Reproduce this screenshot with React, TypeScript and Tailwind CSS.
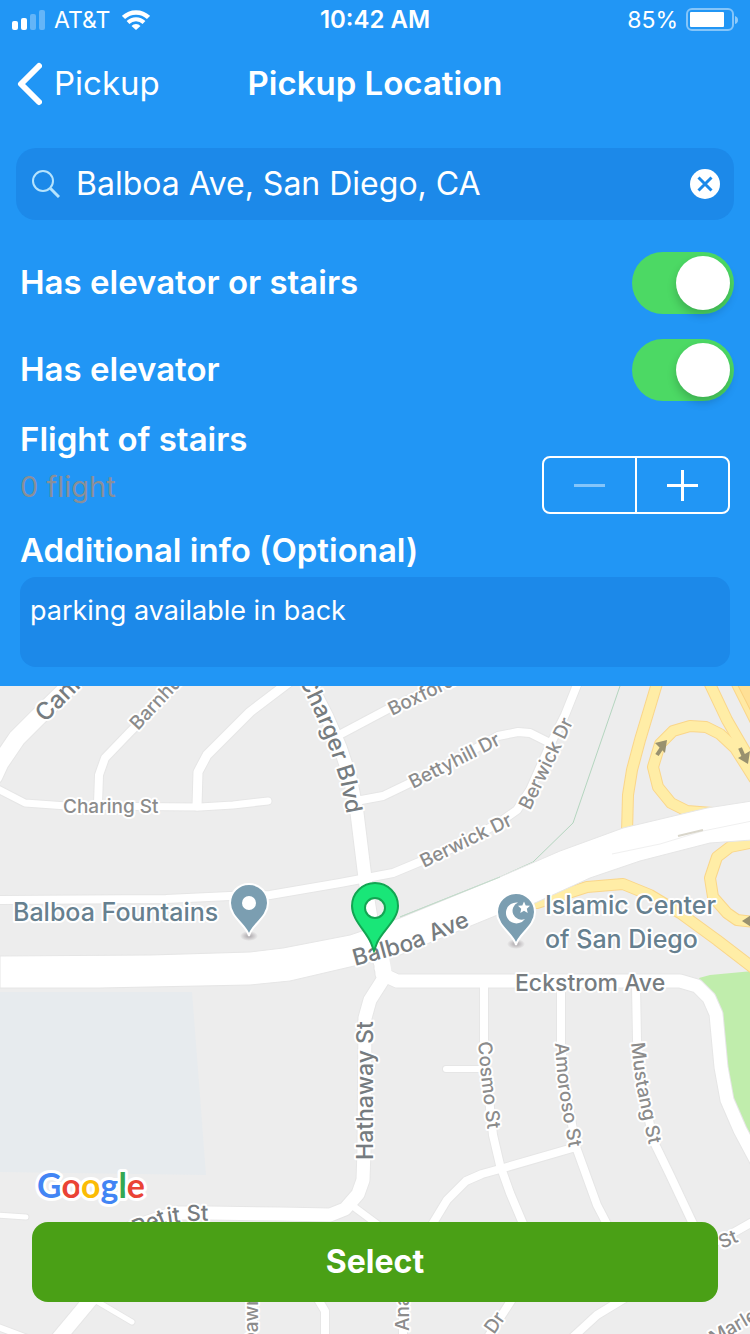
import React, { useState } from 'react'

type Road = { d: string; w: number }

const localRoads: Road[] = [
  { d: 'M-6 776L0 763L17 738L37 718L80 676', w: 17 },
  { d: 'M-4 788L25 803L67 806L200 807L233 805L268 801', w: 7 },
  { d: 'M98 804L99 775L105 758L130 732L182 680', w: 8 },
  { d: 'M197 806L198 772L207 755L250 712L292 680', w: 9 },
  { d: 'M306 676L327 717L340 747L350 777L357 813L365 878L368 900L376 950L385 976', w: 13 },
  { d: 'M341 734L390 708L450 680', w: 8 },
  { d: 'M356 801L383 796L410 783L455 760L498 736L518 732L530 733L550 743', w: 8 },
  { d: 'M-4 900L166 899L230 896L270 895L340 883L393 873L417 863L460 845L500 822L517 810L530 790L550 745L565 715L579 680', w: 8 },
  { d: 'M381 968L384 978L370 1000L365 1018L364 1150L363 1180L358 1194L345 1209L330 1215L280 1214L210 1213L175 1213L130 1228', w: 13 },
  { d: 'M350 1204L385 1230', w: 7 },
  { d: 'M382 974L397 981L680 981L697 986L709 998L716 1014L721 1067L727 1100L740 1130L756 1160', w: 13 },
  { d: 'M484 985V1045L487 1080L493 1135L500 1165L510 1193L524 1226', w: 8 },
  { d: 'M446 1069H484', w: 6 },
  { d: 'M430 1228L447 1200L466 1181L482 1174L500 1169L576 1147L597 1205L609 1228', w: 8 },
  { d: 'M561 985V1045L566 1090L576 1147', w: 8 },
  { d: 'M636 985L637 1040L643 1090L653 1140L670 1175L695 1228', w: 8 },
  { d: 'M700 1250L733 1233L754 1221', w: 8 },
  { d: 'M572 1338L597 1315L630 1295', w: 8 },
  { d: 'M480 1350L500 1318L514 1296', w: 8 },
  { d: 'M57 1340L92 1298', w: 14 },
  { d: 'M98 1302L132 1322', w: 5 },
  { d: 'M-2 1327L30 1339', w: 6 },
  { d: 'M-2 1215L26 1217', w: 5 },
  { d: 'M316 1296L325 1311V1340', w: 8 },
  { d: 'M253 1296V1340', w: 8 },
  { d: 'M403 1296V1340', w: 8 },
]

const ramps: Road[] = [
  { d: 'M658 680L640 740L632 770L628 795L627 832', w: 10 },
  { d: 'M708 680L727 720L756 770', w: 10 },
  { d: 'M754 778L735 748L720 734L706 727L690 726L673 731L660 744L653 767L658 787L671 803L687 811L712 813', w: 10 },
  { d: 'M537 903L587 887L623 884L650 895L680 913L717 940L756 970', w: 10 },
  { d: 'M754 842L730 847L717 857L710 878L713 897L727 913L737 920L754 922', w: 10 },
]

function Roads({ roads, casing, fill }: { roads: Road[]; casing: string; fill: string }) {
  return (
    <g fill="none" strokeLinejoin="round" strokeLinecap="round">
      {roads.map((r) => (
        <path key={'c' + r.d} d={r.d} stroke={casing} strokeWidth={r.w + 2} />
      ))}
      {roads.map((r) => (
        <path key={r.d} d={r.d} stroke={fill} strokeWidth={r.w} />
      ))}
    </g>
  )
}

function CurvedLabel({ id, d, size, children }: { id: string; d: string; size: number; children: string }) {
  return (
    <>
      <path id={id} d={d} fill="none" stroke="none" />
      <text fontSize={size}>
        <textPath href={'#' + id}>{children}</textPath>
      </text>
    </>
  )
}

function StreetMap() {
  return (
    <svg
      viewBox="0 686 750 648"
      preserveAspectRatio="xMidYMin slice"
      className="absolute inset-0 h-full w-full"
      role="img"
      aria-label="Map"
    >
      <defs>
        <radialGradient id="shade">
          <stop offset="0" stopColor="#a9a4a8" />
          <stop offset="1" stopColor="#a9a4a8" stopOpacity="0" />
        </radialGradient>
      </defs>
      <rect x="-500" y="0" width="2000" height="2400" fill="#ededed" />
      <path d="M0 992H192L198 1070L206 1175L0 1172Z" fill="#e7ebee" />
      <path d="M699 978L710 975L752 971V1150L730 1100L718 1010Z" fill="#c0edac" />
      <path d="M620 686L573 823L533 862L500 877L400 917" fill="none" stroke="#b4d5bf" />

      <Roads roads={localRoads} casing="#e6e6e6" fill="#ffffff" />
      <path d="M742 676L772 736" stroke="#fad68a" strokeWidth="28" />
      <path d="M742 676L772 736" stroke="#ffe9a4" strokeWidth="26" />
      <path d="M745 676L775 736" stroke="#fad281" strokeWidth="22" />
      <path d="M745 676L775 736" stroke="#ffe096" strokeWidth="20" />
      <Roads roads={ramps} casing="#fad68a" fill="#ffeda6" />

      <path
        d="M0 956L150 955L250 952L283 948L350 935L400 918L500 877L560 851L623 828L707 808L752 801V840L710 843L640 861L590 878L535 903L500 914L400 955L350 967L290 981L250 985L100 988L0 988Z"
        fill="#ffffff"
        stroke="#e6e6e6"
      />
      <path d="M400 917L500 877" fill="none" stroke="#c3dccb" />
      <path d="M370 930L380 980L392 974L384 930Z" fill="#ffffff" />
      <path d="M612 854L660 844L703 831L752 821" fill="none" stroke="#f0f0f0" />
      <path d="M678 836L703 830" stroke="#d9d6cb" strokeWidth="2" />

      <g stroke="#99916f" strokeWidth="4" fill="#99916f">
        <path d="M657 755L663 746" fill="none" />
        <path d="M655 743L667 740L665 753Z" stroke="none" />
        <path d="M740 748L744 757" fill="none" />
        <path d="M738 758L750 751L748 764Z" stroke="none" />
        <path d="M742 921L751 915V927Z" stroke="none" />
      </g>

      <g
        fontFamily="Inter, 'Liberation Sans', sans-serif"
        stroke="#ffffff"
        strokeWidth="4"
        strokeLinejoin="round"
        paintOrder="stroke"
        fontWeight="500"
      >
        <g fill="#8c8c8c">
          <text x="63" y="813" fontSize="19">Charing St</text>
          <text transform="translate(138 731) rotate(-47)" fontSize="19">Barnhurst</text>
          <text transform="translate(392 716) rotate(-26)" fontSize="19">Boxford</text>
          <text transform="translate(413 789) rotate(-27)" fontSize="19">Bettyhill Dr</text>
          <text transform="translate(424 868) rotate(-26)" fontSize="19">Berwick Dr</text>
          <text transform="translate(530 811) rotate(-64)" fontSize="19">Berwick Dr</text>
          <CurvedLabel id="cosmo" size={19} d="M478 1042L481 1075L491 1160">Cosmo St</CurvedLabel>
          <CurvedLabel id="amoroso" size={19} d="M555 1043L558 1085L571 1160L580 1200">Amoroso St</CurvedLabel>
          <CurvedLabel id="mustang" size={19} d="M631 1043L636 1085L652 1160L660 1200">Mustang St</CurvedLabel>
          <text transform="translate(722 1249) rotate(-24)" fontSize="19">St</text>
          <text transform="translate(714 1345) rotate(-30)" fontSize="19">Marlesta</text>
          <text transform="translate(494 1335) rotate(-55)" fontSize="19">Dr</text>
          <text transform="translate(258 1346) rotate(-90)" fontSize="19">Dawn</text>
          <text transform="translate(409 1331) rotate(-90)" fontSize="19">Anabel</text>
        </g>
        <g fill="#767c80">
          <text transform="translate(45 723) rotate(-45)" fontSize="24">Cannington</text>
          <CurvedLabel id="charger" size={23} d="M299 680L317 718L331 752L340 780L350 830">Charger Blvd</CurvedLabel>
          <CurvedLabel id="balboa" size={23} d="M355 966L410 951L500 913">Balboa Ave</CurvedLabel>
          <text x="515" y="991" fontSize="23">Eckstrom Ave</text>
          <text transform="translate(373 1160) rotate(-90)" fontSize="23">Hathaway St</text>
          <CurvedLabel id="petit" size={22} d="M136 1236L165 1224L188 1221L245 1220">Petit St</CurvedLabel>
        </g>
        <g fill="#66808f" fontSize="25">
          <text x="13" y="921">Balboa Fountains</text>
          <text x="545" y="914">Islamic Center</text>
          <text x="545" y="948">of San Diego</text>
        </g>
        <text x="37" y="1198" fontSize="34" fontFamily="Lato, 'Liberation Sans', sans-serif" fontWeight="700" strokeWidth="6">
          <tspan fill="#4285f4">G</tspan>
          <tspan fill="#ea4335">o</tspan>
          <tspan fill="#fbbc05">o</tspan>
          <tspan fill="#4285f4">g</tspan>
          <tspan fill="#34a853">l</tspan>
          <tspan fill="#ea4335">e</tspan>
        </text>
      </g>

      {/* places */}
      <ellipse cx="249" cy="936" rx="9" ry="5" fill="url(#shade)" />
      <path d="M249 936C247 925 230 918 230 903A19 19 0 0 1 268 903C268 918 251 925 249 936Z" fill="#7b9eb1" stroke="#fff" strokeWidth="2" />
      <circle cx="249" cy="903" r="7" fill="#fff" />
      <ellipse cx="516" cy="944" rx="9" ry="5" fill="url(#shade)" />
      <path d="M516 945C514 934 497 927 497 912A19 19 0 0 1 535 912C535 927 518 934 516 945Z" fill="#7b9eb1" stroke="#fff" strokeWidth="2" />
      <path d="M518 902.500A10.500 10.500 0 1 0 525 919A8.500 8.500 0 1 1 518 902.500Z" fill="#fff" />
      <path d="M524 901.500L525.700 905.400L530 905.800L526.800 908.700L527.700 913L524 910.700L520.300 913L521.200 908.700L518 905.800L522.300 905.400Z" fill="#fff" />

      {/* picked spot */}
      <path
        d="M374 951L371 943C366 931 352 920 352 906A23 23 0 0 1 398 906C398 920 382 931 377 943ZM375 898A10 10 0 1 0 375 918A10 10 0 1 0 375 898Z"
        fill="#19e678"
        fillRule="evenodd"
        stroke="#12a552"
        strokeWidth="2"
      />
    </svg>
  )
}

function StatusBar() {
  return (
    <div className="grid h-10 grid-cols-3 items-center px-3 text-[23px]">
      <div className="flex items-center">
        <svg viewBox="0 0 34 20" className="h-5 w-[34px]" fill="#fff">
          <rect x="0" y="11" width="6" height="9" rx="2" />
          <rect x="9" y="8" width="6" height="12" rx="2" />
          <rect x="18" y="4" width="6" height="16" rx="2" opacity=".3" />
          <rect x="27" y="0" width="6" height="20" rx="2" opacity=".3" />
        </svg>
        <span className="ml-2">AT&amp;T</span>
        <svg viewBox="0 0 28 20" className="ml-3 h-5 w-7" fill="none" stroke="#fff" strokeWidth="5">
          <path d="M1.500 7.500A18 18 0 0 1 26.500 7.500" strokeWidth="4.500" />
          <path d="M6 12.500A11.500 11.500 0 0 1 22 12.500" strokeWidth="4" />
          <path d="M14 20L9.500 16A6 6 0 0 1 18.500 16Z" fill="#fff" stroke="none" />
        </svg>
      </div>
      <span className="text-center text-[24px] font-semibold">10:42 AM</span>
      <div className="flex items-center justify-end">
        <span>85%</span>
        <svg viewBox="0 0 52 24" className="ml-2 h-6 w-[52px]">
          <rect x="1" y="1" width="46" height="21" rx="5" fill="none" stroke="#fff" strokeOpacity=".45" strokeWidth="2" />
          <rect x="4" y="4" width="34" height="15" rx="1" fill="#fff" />
          <path d="M49 8Q52 9 52 12Q52 15 49 16Z" fill="#fff" opacity=".5" />
        </svg>
      </div>
    </div>
  )
}

function SwitchRow({ id, label }: { id: string; label: string }) {
  const [on, setOn] = useState(true)
  return (
    <div className="flex h-[62px] items-center justify-between">
      <label htmlFor={id} className="pl-1 font-semibold">{label}</label>
      <input
        id={id}
        type="checkbox"
        role="switch"
        checked={on}
        onChange={() => setOn(!on)}
        className="h-[62px] w-[102px] shrink-0 appearance-none rounded-full bg-white/30 p-1 before:block before:size-[54px] before:rounded-full before:bg-white before:shadow-[0_5px_10px_rgba(0,0,0,0.2)] checked:bg-[#4cd964] checked:before:translate-x-10"
      />
    </div>
  )
}

function App() {
  const [address, setAddress] = useState('Balboa Ave, San Diego, CA')
  const [flights, setFlights] = useState(0)
  const [info, setInfo] = useState('parking available in back')

  return (
    <div className="flex min-h-screen flex-col bg-[#2196f5] font-[Inter,'Liberation_Sans',sans-serif] text-white">
      <StatusBar />

      <header className="grid h-[88px] grid-cols-[1fr_auto_1fr] items-center px-4 text-[33px]">
        <a href="#pickup" className="flex items-center gap-3">
          <svg viewBox="0 0 26 44" className="h-11 w-[26px]" fill="none" stroke="#fff" strokeWidth="6" strokeLinecap="round" strokeLinejoin="round">
            <path d="M23 4L5 22L23 40" />
          </svg>
          Pickup
        </a>
        <h1 className="font-semibold">Pickup Location</h1>
      </header>

      <div className="px-4 pt-5 text-[32px]">
        <div className="flex h-[72px] items-center rounded-[20px] bg-[#1c89e9] pl-4 pr-3">
          <svg viewBox="0 0 28 28" className="size-7" fill="none" stroke="#b5e3fd" strokeWidth="2">
            <circle cx="11" cy="11" r="10" />
            <path d="M18.500 18.500L27 27" strokeWidth="3" />
          </svg>
          <input
            type="text"
            aria-label="Address"
            value={address}
            onChange={(e) => setAddress(e.target.value)}
            className="ml-4 min-w-0 flex-1 bg-transparent outline-none"
          />
          <button type="button" aria-label="Clear" onClick={() => setAddress('')}>
            <svg viewBox="0 0 34 34" className="size-[34px]">
              <circle cx="17" cy="17" r="15" fill="#fff" />
              <path d="M10.500 10.500L23.500 23.500M23.500 10.500L10.500 23.500" stroke="#1c89e9" strokeWidth="3" />
            </svg>
          </button>
        </div>
      </div>

      <div className="flex flex-col gap-[25px] px-4 pt-8 text-[33px]">
        <SwitchRow id="access" label="Has elevator or stairs" />
        <SwitchRow id="elevator" label="Has elevator" />
      </div>

      <div className="flex items-end justify-between px-5 pt-[17px]">
        <div>
          <h2 className="text-[33px] font-semibold leading-[42px]">Flight of stairs</h2>
          <p className="text-[29px] leading-[54px] text-[#8a8f98]">{flights} flight</p>
        </div>
        <div className="flex h-[58px] w-[188px] divide-x-2 divide-white rounded-lg border-2 border-white">
          <button
            type="button"
            aria-label="Fewer flights"
            disabled={flights === 0}
            onClick={() => setFlights(flights - 1)}
            className="flex flex-1 items-center justify-center"
          >
            <svg viewBox="0 0 31 31" className="size-[31px]" stroke={flights === 0 ? '#84c5fa' : '#fff'} strokeWidth="3">
              <path d="M0 15.500H31" />
            </svg>
          </button>
          <button
            type="button"
            aria-label="More flights"
            onClick={() => setFlights(flights + 1)}
            className="flex flex-1 items-center justify-center"
          >
            <svg viewBox="0 0 31 31" className="size-[31px]" stroke="#fff" strokeWidth="3">
              <path d="M0 15.500H31M15.500 0V31" />
            </svg>
          </button>
        </div>
      </div>

      <div className="flex flex-col px-5 pb-[19px] pt-[9px]">
        <label htmlFor="info" className="text-[33px] font-semibold leading-[54px]">
          Additional info (Optional)
        </label>
        <textarea
          id="info"
          value={info}
          onChange={(e) => setInfo(e.target.value)}
          className="h-[90px] resize-none rounded-[16px] bg-[#1c89e9] px-[10px] py-4 text-[27px] leading-9 outline-none"
        />
      </div>

      <main className="relative min-h-[648px] flex-1 overflow-hidden">
        <StreetMap />
        <button
          type="button"
          className="absolute inset-x-8 bottom-8 h-20 rounded-[16px] bg-[#4aa016] text-[32px] font-bold"
        >
          Select
        </button>
      </main>
    </div>
  )
}

export default App
